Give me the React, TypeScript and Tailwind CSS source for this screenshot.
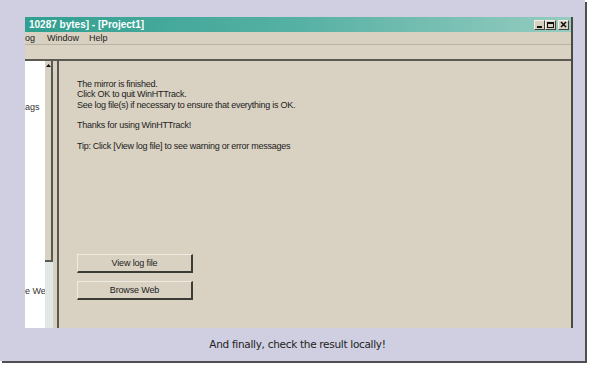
import React from "react";

const sans = { fontFamily: '"Liberation Sans", Arial, sans-serif' };

function TitleBtn({ children }: { children: React.ReactNode }) {
  return (
    <div className="w-[11px] h-[10px] bg-[#d8d0c0] border-t border-l border-t-[#f4f0e8] border-l-[#f4f0e8] border-r border-b border-r-[#404040] border-b-[#404040] flex items-center justify-center text-[#111] text-[9px] leading-none font-bold">
      {children}
    </div>
  );
}

function Btn({ label }: { label: string }) {
  return (
    <div className="w-[116px] h-[19px] bg-[#d9d1c1] border-t border-l border-t-[#f0ebe0] border-l-[#f0ebe0] border-r-2 border-b-2 border-r-[#3c3c36] border-b-[#3c3c36] flex items-center justify-center text-[9px] text-[#222] tracking-[-0.15px]">
      {label}
    </div>
  );
}

export default function App() {
  return (
    <div className="w-[589px] h-[365px] bg-white" style={sans}>
      <div className="w-[585px] h-[361px] bg-[#cfcfe1] shadow-[2px_2px_0_rgba(60,60,60,0.9)] flex flex-col">
        <div className="pl-[25px] pt-[17px]">
          <div className="w-[548px] h-[311px] bg-[#d8d0c0] border-r-2 border-r-[#4a4a44] flex flex-col">
            {/* title bar */}
            <div className="h-[15px] bg-gradient-to-r from-[#2f9f90] via-[#55b1a4] to-[#94ccc0] flex items-center justify-between pl-[4px] pr-[2px]">
              <span className="text-white font-bold text-[10px] leading-none whitespace-nowrap">10287 bytes] - [Project1]</span>
              <div className="flex items-center">
                <TitleBtn>
                  <span className="block w-[5px] h-[2px] bg-[#111] mt-[4px]" />
                </TitleBtn>
                <TitleBtn>
                  <span className="block w-[7px] h-[6px] border border-[#111] border-t-2" />
                </TitleBtn>
                <div className="w-[2px]" />
                <TitleBtn>
                  <svg width="7" height="7" viewBox="0 0 7 7">
                    <path d="M1 1L6 6M6 1L1 6" stroke="#111" strokeWidth="1.6" />
                  </svg>
                </TitleBtn>
              </div>
            </div>
            {/* menu bar */}
            <div className="h-[12px] flex items-center text-[9px] text-[#222] leading-none">
              <span className="w-[22px] whitespace-nowrap">og</span>
              <span className="w-[42px]">Window</span>
              <span>Help</span>
            </div>
            <div className="h-[1px] bg-[#b8b2a4]" />
            <div className="h-[14px] bg-[#dad3c4]" />
            <div className="h-[2px] bg-[#5c5a50]" />
            {/* content */}
            <div className="flex-1 flex flex-row min-h-0">
              <div className="w-[20px] bg-white flex flex-col text-[9px] text-[#333] overflow-hidden">
                <div className="h-[40px]" />
                <div className="whitespace-nowrap">ags</div>
                <div className="h-[170px]" />
                <div className="whitespace-nowrap">e We</div>
              </div>
              <div className="w-[8px] flex flex-col">
                <div className="h-[201px] bg-[#d8d2c4] border-r-2 border-r-[#5a5850] border-b-2 border-b-[#5a5850] flex flex-col items-center">
                  <svg width="5" height="4" viewBox="0 0 5 4" className="mt-[3px]">
                    <path d="M2.5 0L5 3H0Z" fill="#111" />
                  </svg>
                </div>
                <div className="flex-1 bg-[#e2e8e5]" />
              </div>
              <div className="w-[4px] bg-[#d8d0c0]" />
              <div className="flex-1 border-l-2 border-l-[#5a5850] bg-[#d9d1c1] pl-[18px] pt-[18px] flex flex-col">
                <div className="text-[9px] leading-[10.33px] text-[#222] tracking-[-0.26px]">
                  <div>The mirror is finished.</div>
                  <div>Click OK to quit WinHTTrack.</div>
                  <div>See log file(s) if necessary to ensure that everything is OK.</div>
                  <div>&nbsp;</div>
                  <div>Thanks for using WinHTTrack!</div>
                  <div>&nbsp;</div>
                  <div>Tip: Click [View log file] to see warning or error messages</div>
                </div>
                <div className="mt-[103px] flex flex-col gap-[8px]">
                  <Btn label="View log file" />
                  <Btn label="Browse Web" />
                </div>
              </div>
            </div>
          </div>
        </div>
        <div className="flex-1 flex items-center justify-center pl-[10px]">
          <span className="text-[10.5px] text-[#222]" style={{ fontFamily: '"DejaVu Sans", Verdana, sans-serif', letterSpacing: "-0.3px" }}>
            And finally, check the result locally!
          </span>
        </div>
      </div>
    </div>
  );
}
